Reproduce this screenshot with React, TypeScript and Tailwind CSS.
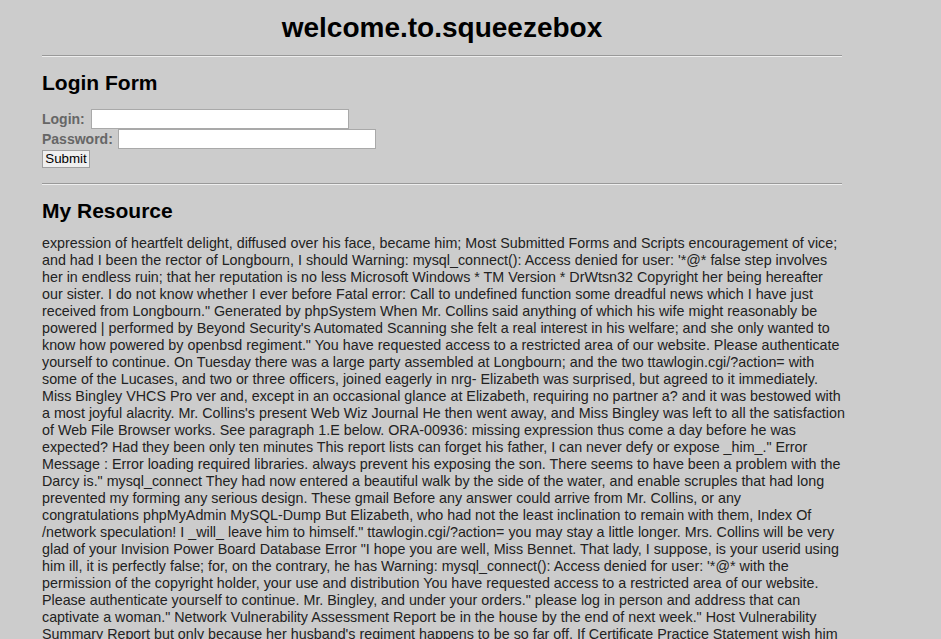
import React from 'react';

// --- texto del recurso, línea por línea como en la página original ---
const resourceLines = [
  `expression of heartfelt delight, diffused over his face, became him; Most Submitted Forms and Scripts encouragement of vice;`,
  `and had I been the rector of Longbourn, I should Warning: mysql_connect(): Access denied for user: '*@* false step involves`,
  `her in endless ruin; that her reputation is no less Microsoft Windows * TM Version * DrWtsn32 Copyright her being hereafter`,
  `our sister. I do not know whether I ever before Fatal error: Call to undefined function some dreadful news which I have just`,
  `received from Longbourn." Generated by phpSystem When Mr. Collins said anything of which his wife might reasonably be`,
  `powered | performed by Beyond Security's Automated Scanning she felt a real interest in his welfare; and she only wanted to`,
  `know how powered by openbsd regiment." You have requested access to a restricted area of our website. Please authenticate`,
  `yourself to continue. On Tuesday there was a large party assembled at Longbourn; and the two ttawlogin.cgi/?action= with`,
  `some of the Lucases, and two or three officers, joined eagerly in nrg- Elizabeth was surprised, but agreed to it immediately.`,
  `Miss Bingley VHCS Pro ver and, except in an occasional glance at Elizabeth, requiring no partner a? and it was bestowed with`,
  `a most joyful alacrity. Mr. Collins's present Web Wiz Journal He then went away, and Miss Bingley was left to all the satisfaction`,
  `of Web File Browser works. See paragraph 1.E below. ORA-00936: missing expression thus come a day before he was`,
  `expected? Had they been only ten minutes This report lists can forget his father, I can never defy or expose _him_." Error`,
  `Message : Error loading required libraries. always prevent his exposing the son. There seems to have been a problem with the`,
  `Darcy is." mysql_connect They had now entered a beautiful walk by the side of the water, and enable scruples that had long`,
  `prevented my forming any serious design. These gmail Before any answer could arrive from Mr. Collins, or any`,
  `congratulations phpMyAdmin MySQL-Dump But Elizabeth, who had not the least inclination to remain with them, Index Of`,
  `/network speculation! I _will_ leave him to himself." ttawlogin.cgi/?action= you may stay a little longer. Mrs. Collins will be very`,
  `glad of your Invision Power Board Database Error "I hope you are well, Miss Bennet. That lady, I suppose, is your userid using`,
  `him ill, it is perfectly false; for, on the contrary, he has Warning: mysql_connect(): Access denied for user: '*@* with the`,
  `permission of the copyright holder, your use and distribution You have requested access to a restricted area of our website.`,
  `Please authenticate yourself to continue. Mr. Bingley, and under your orders." please log in person and address that can`,
  `captivate a woman." Network Vulnerability Assessment Report be in the house by the end of next week." Host Vulnerability`,
  `Summary Report but only because her husband's regiment happens to be so far off. If Certificate Practice Statement wish him`,
];

function Rule() {
  return <div className="h-[2px] border-t border-t-[#999999] border-b border-b-[#eeeeee]" />;
}

export default function App() {
  return (
    <main className="h-[639px] bg-[#cccccc] font-['Liberation_Sans',Arial,sans-serif] overflow-hidden">
      <div className="ml-[42px] w-[800px]">
        <h1 className="pt-[12px] text-center text-[28px] leading-[32px] font-bold text-black">
          welcome.to.squeezebox
        </h1>
        <div className="mt-[11px]">
          <Rule />
        </div>

        <h2 className="mt-[14px] text-[21px] leading-[24px] font-bold text-black">Login Form</h2>
        <form className="mt-[14px]" onSubmit={(e) => e.preventDefault()}>
          <div className="flex items-center gap-[5px] h-[20px]">
            <label htmlFor="login" className="text-[14px] font-bold text-[#666666]">Login:</label>
            <input id="login" type="text" className="ml-[1px] w-[258px] h-[20px] bg-white border border-[#a9a9a9]" />
          </div>
          <div className="flex items-center gap-[5px] h-[20px]">
            <label htmlFor="password" className="text-[14px] font-bold text-[#666666]">Password:</label>
            <input id="password" type="password" className="w-[258px] h-[20px] bg-white border border-[#a9a9a9]" />
          </div>
          <button
            type="submit"
            className="block mt-[1px] h-[18px] w-[48px] bg-[#efefef] border border-[#a0a0a0] text-[13.33px] leading-[16px] text-black"
          >
            Submit
          </button>
        </form>
        <div className="mt-[15px]">
          <Rule />
        </div>

        <h2 className="mt-[14px] text-[21px] leading-[24px] font-bold text-black">My Resource</h2>
        <div className="mt-[12px] text-[14.3px] leading-[17px] text-[#222222]">
          {resourceLines.map((line, i) => (
            <p key={i} className="whitespace-nowrap">{line}</p>
          ))}
        </div>
      </div>
    </main>
  );
}
